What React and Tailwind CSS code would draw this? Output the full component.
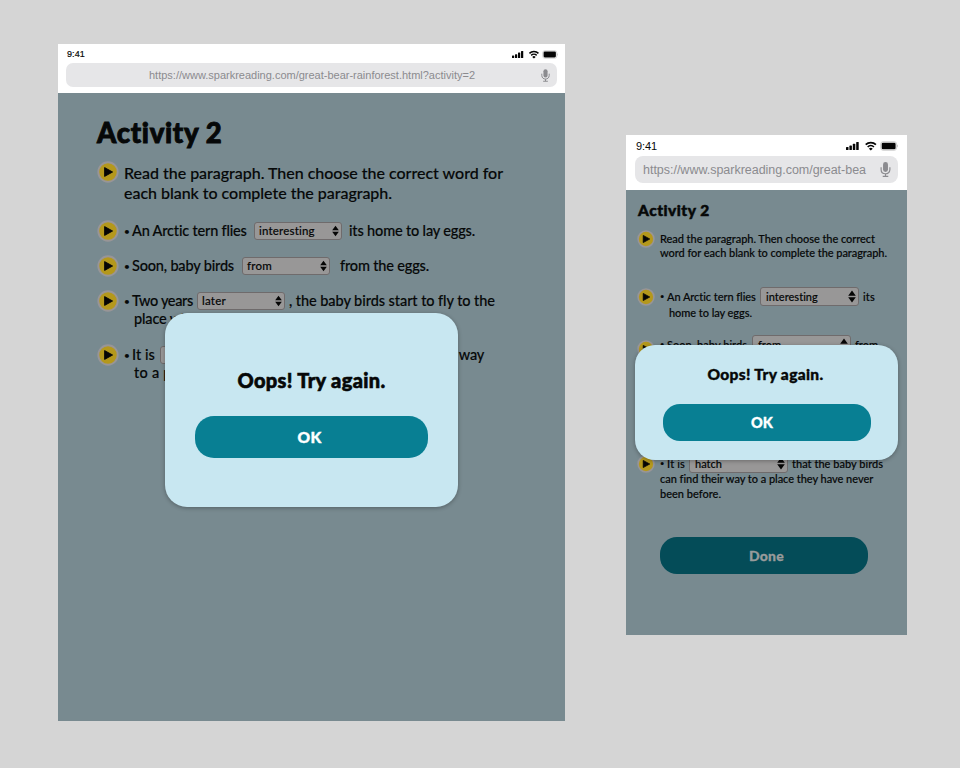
import { useLayoutEffect, useRef } from "react";

// A single line of copy, tracked so that it spans exactly `w` pixels.
function Line({ w, className = "", children }) {
  const ref = useRef(null);
  useLayoutEffect(() => {
    const el = ref.current;
    el.style.letterSpacing = "0px";
    const natural = el.getBoundingClientRect().width;
    el.style.letterSpacing = `${(w - natural) / el.textContent.length}px`;
  }, [w, children]);
  return (
    <span className={`block shrink-0 whitespace-nowrap ${className}`} style={{ width: w }}>
      <span ref={ref} className="inline-block">{children}</span>
    </span>
  );
}

function Play({ className = "size-[22px]" }) {
  return (
    <svg viewBox="0 0 22 22" className={`block shrink-0 ${className}`}>
      <circle cx="11" cy="11" r="9.7" fill="#b4981c" stroke="#989597" strokeWidth="1.9" />
      <path d="M7.6 6.6v8.8l8-4.4z" fill="#060606" stroke="#060606" strokeWidth=".9" strokeLinejoin="round" />
    </svg>
  );
}

function Arrows({ className = "h-[12px] w-[8px]" }) {
  return (
    <svg viewBox="0 0 8 12" className={`block shrink-0 ${className}`} fill="#060606">
      <path d="M4 0 7.8 5.2H.2zM4 12 7.8 6.8H.2z" />
    </svg>
  );
}

function SmallSelect({ w, children }) {
  return (
    <span className="flex h-[18px] w-[88px] shrink-0 items-center justify-between rounded-[3px] border border-[#6f6b6c] bg-[#989797] pr-[2px] pl-[4px] text-[11.5px] leading-[16px]">
      <Line w={w}>{children}</Line>
      <Arrows className="h-[12px] w-[7px]" />
    </span>
  );
}

function PhoneSelect({ w, children }) {
  return (
    <span className="mb-px flex h-[19px] w-[99px] shrink-0 items-center justify-between rounded-[3px] border border-[#6f6b6c] bg-[#989797] pr-[2px] pl-[5px] text-[11px] leading-[17px]">
      <Line w={w}>{children}</Line>
      <Arrows className="h-[13px] w-[8px]" />
    </span>
  );
}

function StatusIcons({ className }) {
  return (
    <svg viewBox="0 0 52 10" className={`block ${className}`} fill="#050505">
      <rect x="0" y="6" width="2.5" height="3" rx=".6" />
      <rect x="3.4" y="4.6" width="2.5" height="4.4" rx=".6" />
      <rect x="6.8" y="2.8" width="2.5" height="6.2" rx=".6" />
      <rect x="10.2" y="1" width="2.5" height="8" rx=".6" />
      <g fill="none" stroke="#050505" strokeWidth="1.7">
        <path d="M19.7 3.7a7.2 7.2 0 0 1 10.2 0" />
        <path d="M21.7 6a4.4 4.4 0 0 1 6.2 0" />
      </g>
      <path d="M24.8 9.6 22.9 7.7a2.7 2.7 0 0 1 3.8 0z" />
      <rect x="34.7" y=".7" width="15.9" height="8.6" rx="2.4" fill="none" stroke="#bdbdbd" strokeWidth=".7" />
      <rect x="35.7" y="1.7" width="13.9" height="6.6" rx="1.3" />
      <path d="M51.2 3.6v2.8c1-.5 1-2.3 0-2.8z" fill="#b5b5b5" />
    </svg>
  );
}

function Mic({ className }) {
  return (
    <svg viewBox="0 0 10 14" className={`block ${className}`}>
      <rect x="2.7" y="0" width="4.6" height="9.3" rx="2.3" fill="#8b8b8f" />
      <path d="M.9 5v2c0 5.3 8.2 5.3 8.2 0V5M5 11v2.2M2.4 13.4h5.2" fill="none" stroke="#8b8b8f" strokeWidth="1.1" />
    </svg>
  );
}

function Bullet({ className = "w-[8px] text-[10px]" }) {
  return <span className={`block shrink-0 ${className}`}>•</span>;
}

function Tablet() {
  return (
    <section className="relative mt-[44px] ml-[58px] h-[677px] w-[507px] shrink-0 overflow-hidden bg-[#788a90]">
      <header className="h-[49px] bg-white px-[8px] font-['Liberation_Sans',sans-serif]">
        <div className="flex h-[19px] items-center justify-between pl-px">
          <Line w={18} className="text-[9px] leading-[12px] [-webkit-text-stroke:0.2px_currentColor]">9:41</Line>
          <StatusIcons className="mt-[2px] -mr-px h-[9px] w-[46px]" />
        </div>
        <div className="flex h-[24px] items-center rounded-[7px] bg-[#e6e6e8] pr-[7px] pl-[83px] text-[11px] text-[#8b8b8f]">
          <Line w={326} className="leading-[16px]">https://www.sparkreading.com/great-bear-rainforest.html?activity=2</Line>
          <Mic className="ml-auto h-[13px] w-[9px]" />
        </div>
      </header>
      <div className="px-[39px] pt-[20px] text-[14.5px] [-webkit-text-stroke:0.15px_currentColor]">
        <h1 className="text-[27.5px] leading-[40px] font-black [-webkit-text-stroke:0.9px_currentColor]"><Line w={126}>Activity 2</Line></h1>
        <div className="mt-[8px] flex h-[43px]">
          <Play />
          <div className="pt-[2px] pl-[5px] text-[16px] leading-[20px]">
            <Line w={379}>Read the paragraph. Then choose the correct word for</Line>
            <Line w={268}>each blank to complete the paragraph.</Line>
          </div>
        </div>
        <div className="mt-[16px] flex h-[22px] items-center leading-[22px]">
          <Play />
          <div className="ml-[5px] flex"><Bullet /><Line w={115}>An Arctic tern flies</Line></div>
          <span className="ml-[7px]"><SmallSelect w={56}>interesting</SmallSelect></span>
          <Line w={126} className="ml-[7px]">its home to lay eggs.</Line>
        </div>
        <div className="mt-[13px] flex h-[22px] items-center leading-[22px]">
          <Play />
          <div className="ml-[5px] flex"><Bullet /><Line w={102}>Soon, baby birds</Line></div>
          <span className="ml-[8px]"><SmallSelect w={25}>from</SmallSelect></span>
          <Line w={89} className="ml-[10px]">from the eggs.</Line>
        </div>
        <div className="mt-[13px] flex h-[22px] items-center leading-[22px]">
          <Play />
          <div className="ml-[5px] flex"><Bullet /><Line w={61}>Two years</Line></div>
          <span className="ml-[4px]"><SmallSelect w={24}>later</SmallSelect></span>
          <Line w={206} className="ml-[4px]">, the baby birds start to fly to the</Line>
        </div>
        <div className="-mt-[4px] h-[22px] pl-[37px] leading-[22px]">
          <Line w={176}>place where they were born.</Line>
        </div>
        <div className="mt-[14px] flex h-[22px] items-center leading-[22px]">
          <Play />
          <div className="ml-[5px] flex"><Bullet /><Line w={23}>It is</Line></div>
          <span className="ml-[5px]"><SmallSelect w={29}>hatch</SmallSelect></span>
          <Line w={231} className="ml-[5px]">that the baby birds can find their way</Line>
        </div>
        <div className="-mt-[4px] h-[22px] pl-[37px] leading-[22px]">
          <Line w={64}>to a place</Line>
        </div>
      </div>
      <div className="absolute top-[269px] left-[107px] flex h-[194px] w-[293px] flex-col items-center rounded-[22px] bg-[#c8e7f1] pt-[53px] shadow-[0_1px_4px_rgba(0,0,0,0.3)]">
        <Line w={148} className="text-[20px] leading-[28px] font-black [-webkit-text-stroke:0.6px_currentColor]">Oops! Try again.</Line>
        <button className="mt-[22px] flex h-[42px] w-[233px] items-center justify-center rounded-[19px] bg-[#087f93] pt-[2px] pr-[4px] text-[15.5px] font-black text-white [-webkit-text-stroke:0.4px_currentColor]">
          <Line w={24}>OK</Line>
        </button>
      </div>
    </section>
  );
}

function Phone() {
  return (
    <section className="relative mt-[135px] ml-[61px] h-[500px] w-[281px] shrink-0 overflow-hidden bg-[#788a90]">
      <header className="h-[55px] bg-white px-[9px] font-['Liberation_Sans',sans-serif]">
        <div className="flex h-[21px] items-center justify-between pl-px">
          <Line w={21} className="text-[11px] leading-[14px]">9:41</Line>
          <StatusIcons className="mt-[1px] h-[10px] w-[52px]" />
        </div>
        <div className="flex h-[27px] items-center rounded-[8px] bg-[#e6e6e8] pr-[7px] pl-[8px] text-[12.5px] text-[#8b8b8f]">
          <Line w={223} className="leading-[18px]">https://www.sparkreading.com/great-bea</Line>
          <Mic className="ml-auto h-[15px] w-[11px]" />
        </div>
      </header>
      <div className="pt-[9px] pl-[12px] text-[11px] [-webkit-text-stroke:0.15px_currentColor]">
        <h1 className="text-[15.5px] leading-[22px] font-black [-webkit-text-stroke:0.5px_currentColor]"><Line w={72}>Activity 2</Line></h1>
        <div className="mt-[9px] flex h-[31px]">
          <Play className="-ml-px size-[18px]" />
          <div className="pt-[2px] pl-[5px] leading-[14px]">
            <Line w={215}>Read the paragraph. Then choose the correct</Line>
            <Line w={227}>word for each blank to complete the paragraph.</Line>
          </div>
        </div>
        <div className="mt-[26px] flex h-[20px] items-center leading-[20px]">
          <Play className="-ml-px size-[18px]" />
          <div className="ml-[5px] flex"><Bullet className="w-[7px] text-[7.5px]" /><Line w={89}>An Arctic tern flies</Line></div>
          <span className="ml-[4px]"><PhoneSelect w={52}>interesting</PhoneSelect></span>
          <Line w={12} className="ml-[4px]">its</Line>
        </div>
        <div className="-mt-[2px] h-[16px] pl-[31px] leading-[16px]">
          <Line w={83}>home to lay eggs.</Line>
        </div>
        <div className="mt-[14px] flex h-[20px] items-center leading-[20px]">
          <Play className="mt-[7px] -ml-px size-[18px]" />
          <div className="ml-[5px] flex"><Bullet className="w-[7px] text-[7.5px]" /><Line w={80}>Soon, baby birds</Line></div>
          <span className="ml-[5px]"><PhoneSelect w={23}>from</PhoneSelect></span>
          <Line w={23} className="ml-[4px]">from</Line>
        </div>
        <div className="mt-[99px] flex h-[20px] items-center leading-[20px]">
          <Play className="-ml-px size-[18px]" />
          <div className="ml-[5px] flex"><Bullet className="w-[7px] text-[7.5px]" /><Line w={18}>It is</Line></div>
          <span className="ml-[4px]"><PhoneSelect w={27}>hatch</PhoneSelect></span>
          <Line w={91} className="ml-[4px]">that the baby birds</Line>
        </div>
        <div className="-mt-[3px] pl-[22px] leading-[15px]">
          <Line w={213}>can find their way to a place they have never</Line>
          <Line w={61}>been before.</Line>
        </div>
        <button className="mt-[36px] ml-[22px] flex h-[37px] w-[208px] items-center justify-center rounded-[17px] bg-[#044c58] pl-[5px] text-[14px] font-black text-[#989b9b] [-webkit-text-stroke:0.3px_currentColor]">
          <Line w={35}>Done</Line>
        </button>
      </div>
      <div className="absolute top-[210px] left-[9px] flex h-[115px] w-[263px] flex-col items-center rounded-[20px] bg-[#c8e7f1] pt-[18px] shadow-[0_1px_4px_rgba(0,0,0,0.3)]">
        <Line w={116} className="-ml-[2px] text-[15.5px] leading-[22px] font-black [-webkit-text-stroke:0.4px_currentColor]">Oops! Try again.</Line>
        <button className="mt-[19px] flex h-[37px] w-[208px] items-center justify-center rounded-[17px] bg-[#087f93] pr-[9px] text-[14.5px] font-black text-white [-webkit-text-stroke:0.3px_currentColor]">
          <Line w={22}>OK</Line>
        </button>
      </div>
    </section>
  );
}

export default function App() {
  return (
    <main className="flex h-[768px] w-[960px] items-start overflow-hidden bg-[#d5d5d5] font-['Lato',sans-serif] font-medium text-[#060808]">
      <Tablet />
      <Phone />
    </main>
  );
}
